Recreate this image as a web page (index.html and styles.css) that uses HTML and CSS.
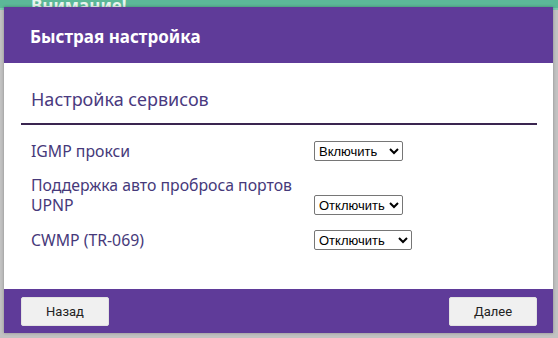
FILE: index.html
```html
<!DOCTYPE html>
<html lang="ru">
<head>
    <meta charset="UTF-8">
    <title>Быстрая настройка</title>
    <link rel="stylesheet" href="styles.css">
</head>
<body>
    <div class="page-top">Внимание!</div>
    <div class="page-rest"></div>

    <div class="modal">
        <div class="modal-header">Быстрая настройка</div>
        <div class="modal-body">
            <h2 class="section-title">Настройка сервисов</h2>
            <div class="rows">
                <div class="row">
                    <div class="label">IGMP прокси</div>
                    <select class="sel sel-on"><option>Включить</option><option>Отключить</option></select>
                </div>
                <div class="row row-bottom">
                    <div class="label">Поддержка авто проброса портов<br>UPNP</div>
                    <select class="sel sel-off"><option>Отключить</option><option>Включить</option></select>
                </div>
                <div class="row">
                    <div class="label">CWMP (TR-069)</div>
                    <select class="sel sel-wide"><option>Отключить</option><option>Включить</option></select>
                </div>
            </div>
        </div>
        <div class="modal-footer">
            <button class="btn">Назад</button>
            <button class="btn">Далее</button>
        </div>
    </div>
</body>
</html>
```
FILE: styles.css
```css
* {
    box-sizing: border-box;
    margin: 0;
    padding: 0;
}

body {
    width: 558px;
    height: 338px;
    overflow: hidden;
    background: #c4c4c4;
    font-family: "Noto Sans", "Open Sans", sans-serif;
    position: relative;
}

.page-top {
    height: 10px;
    background: #5cb898;
    color: #e8f4ee;
    font-weight: bold;
    font-size: 17px;
    line-height: 12px;
    padding-left: 31px;
    overflow: hidden;
    border-bottom: 2px solid #7fc9ad;
}

.page-rest {
    height: 328px;
    background: #c2c2c2;
}

.modal {
    position: absolute;
    left: 4px;
    top: 7px;
    width: 549px;
    height: 326px;
    display: flex;
    flex-direction: column;
    background: #fff;
    box-shadow: 0 0 3px rgba(0, 0, 0, 0.3);
}

.modal-header {
    height: 56px;
    background: #5f3b99;
    color: #fff;
    font-size: 17px;
    font-weight: bold;
    padding-left: 26px;
    display: flex;
    align-items: center;
    padding-top: 2px;
}

.modal-body {
    flex: 1;
    padding: 0 16px 0 17px;
}

.section-title {
    font-size: 18px;
    font-weight: normal;
    color: #4a3a80;
    padding: 24px 0 0 10px;
    height: 62px;
    border-bottom: 2px solid #3a2550;
}

.rows {
    padding: 16px 0 0 10px;
    display: flex;
    flex-direction: column;
    gap: 14px;
}

.row {
    display: grid;
    grid-template-columns: 283px auto;
    align-items: center;
    color: #46397a;
    font-size: 15.8px;
    line-height: 20px;
}

.row-bottom {
    align-items: end;
    padding-bottom: 1px;
}

.sel {
    font-family: "Liberation Sans", Arial, sans-serif;
    font-size: 13px;
    height: 20px;
    border: 1px solid #767676;
    border-radius: 2px;
    background: #fff;
    color: #000;
    padding: 0;
}

.sel-on { width: 89px; }
.sel-off { width: 89px; }
.sel-wide { width: 98px; }

.modal-footer {
    height: 44px;
    background: #5f3b99;
    display: flex;
    justify-content: space-between;
    align-items: center;
    padding: 0 16px 0 17px;
}

.btn {
    width: 88px;
    height: 29px;
    background: #f0f0f0;
    border: 1px solid #e2e2e2;
    border-radius: 2px;
    font-family: Roboto, "Liberation Sans", sans-serif;
    font-size: 13px;
    color: #222;
}
```
